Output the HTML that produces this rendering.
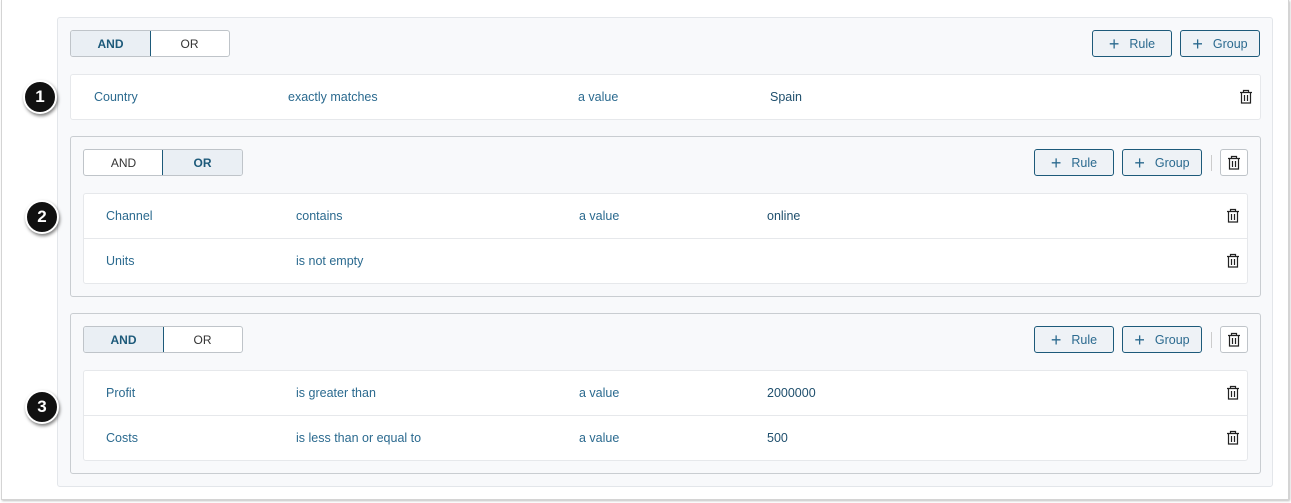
<!DOCTYPE html><html><head><style>
*{box-sizing:border-box;margin:0;padding:0}
body{width:1291px;height:503px;background:#fff;font-family:"Liberation Sans",sans-serif;font-size:12px;position:relative;overflow:hidden}
.abs{position:absolute}
.frame{left:1px;top:0;width:1288px;height:500px;border:1px solid #d4d4d4;border-top:none;box-shadow:1px 1px 2px rgba(0,0,0,.25)}
.cont{left:57px;top:17px;width:1216px;height:470px;background:#f8f9fb;border:1px solid #e3e6ea;border-radius:3px}
.grp{background:#f8f9fb;border:1px solid #c9cdd1;border-radius:3px}
.tog{height:27px;width:160px;display:flex;border:1px solid #bfc4c9;border-radius:3px;background:#fff;overflow:hidden}
.tog div{flex:1;display:flex;align-items:center;justify-content:center;color:#333;font-size:12px}
.tog .on{background:#eaeff4;border:1px solid #1d5a7a;font-weight:bold;color:#1d5a7a;margin:-1px}
.btn{height:27px;width:80px;border:1px solid #1d5a7a;border-radius:3px;background:#eef2f6;color:#2b6a8f;display:flex;align-items:center;justify-content:center;font-size:12.5px}
.btn span{font-size:18px;margin-right:10px;font-weight:300;line-height:1}
.rows{background:#fff;border:1px solid #e6e8eb;border-radius:3px}
.row{position:relative;height:45px;border-bottom:1px solid #e6e8eb}
.row:last-child{border-bottom:none}
.row i{position:absolute;top:15px;font-style:normal;color:#2b6a8f;font-size:12.5px}
.row i.v{color:#1f4f6d}
.tr{position:absolute;top:14px}
.badge{width:34px;height:34px;border-radius:50%;background:#111;border:2px solid #fff;box-shadow:1px 2px 3px rgba(0,0,0,.5);color:#fff;font-weight:bold;font-size:17px;display:flex;align-items:center;justify-content:center}
.sep{width:1px;height:16px;background:#ccc}
.tbox{width:28px;height:27px;border:1px solid #bfc4c9;border-radius:3px;background:#fff;display:flex;align-items:center;justify-content:center}
</style></head><body>
<svg width="0" height="0" style="position:absolute"><defs><g id="t"><path d="M1 3.5h12M4.5 3.5V1.5h5v2M2.5 3.5v10.5h9V3.5M5.5 6v6M8.5 6v6" fill="none" stroke="#222" stroke-width="1.2"/></g></defs></svg>
<div class="abs frame"></div>
<div class="abs cont"></div>
<div class="abs tog" style="left:70px;top:30px"><div class="on">AND</div><div>OR</div></div>
<div class="abs btn" style="left:1092px;top:30px"><span>+</span>Rule</div>
<div class="abs btn" style="left:1180px;top:30px"><span>+</span>Group</div>
<div class="abs rows" style="left:70px;top:74px;width:1191px;height:46px"><div class="row"><i style="left:23px">Country</i><i style="left:217px">exactly matches</i><i style="left:507px">a value</i><i class="v" style="left:699px">Spain</i><svg class="tr" style="left:1168px" width="14" height="16"><use href="#t"/></svg></div></div>

<div class="abs grp" style="left:70px;top:136px;width:1191px;height:161px"></div>
<div class="abs tog" style="left:83px;top:149px"><div>AND</div><div class="on">OR</div></div>
<div class="abs btn" style="left:1034px;top:149px"><span>+</span>Rule</div>
<div class="abs btn" style="left:1122px;top:149px"><span>+</span>Group</div>
<div class="abs sep" style="left:1211px;top:155px"></div>
<div class="abs tbox" style="left:1220px;top:149px"><svg width="14" height="16"><use href="#t"/></svg></div>
<div class="abs rows" style="left:83px;top:193px;width:1165px;height:91px">
<div class="row"><i style="left:22px">Channel</i><i style="left:212px">contains</i><i style="left:495px">a value</i><i class="v" style="left:683px">online</i><svg class="tr" style="left:1142px" width="14" height="16"><use href="#t"/></svg></div>
<div class="row"><i style="left:22px">Units</i><i style="left:212px">is not empty</i><svg class="tr" style="left:1142px" width="14" height="16"><use href="#t"/></svg></div></div>

<div class="abs grp" style="left:70px;top:313px;width:1191px;height:161px"></div>
<div class="abs tog" style="left:83px;top:326px"><div class="on">AND</div><div>OR</div></div>
<div class="abs btn" style="left:1034px;top:326px"><span>+</span>Rule</div>
<div class="abs btn" style="left:1122px;top:326px"><span>+</span>Group</div>
<div class="abs sep" style="left:1211px;top:332px"></div>
<div class="abs tbox" style="left:1220px;top:326px"><svg width="14" height="16"><use href="#t"/></svg></div>
<div class="abs rows" style="left:83px;top:370px;width:1165px;height:91px">
<div class="row"><i style="left:22px">Profit</i><i style="left:212px">is greater than</i><i style="left:495px">a value</i><i class="v" style="left:683px">2000000</i><svg class="tr" style="left:1142px" width="14" height="16"><use href="#t"/></svg></div>
<div class="row"><i style="left:22px">Costs</i><i style="left:212px">is less than or equal to</i><i style="left:495px">a value</i><i class="v" style="left:683px">500</i><svg class="tr" style="left:1142px" width="14" height="16"><use href="#t"/></svg></div></div>

<div class="abs badge" style="left:23px;top:80px">1</div>
<div class="abs badge" style="left:25px;top:200px">2</div>
<div class="abs badge" style="left:25px;top:390px">3</div>
</body></html>
